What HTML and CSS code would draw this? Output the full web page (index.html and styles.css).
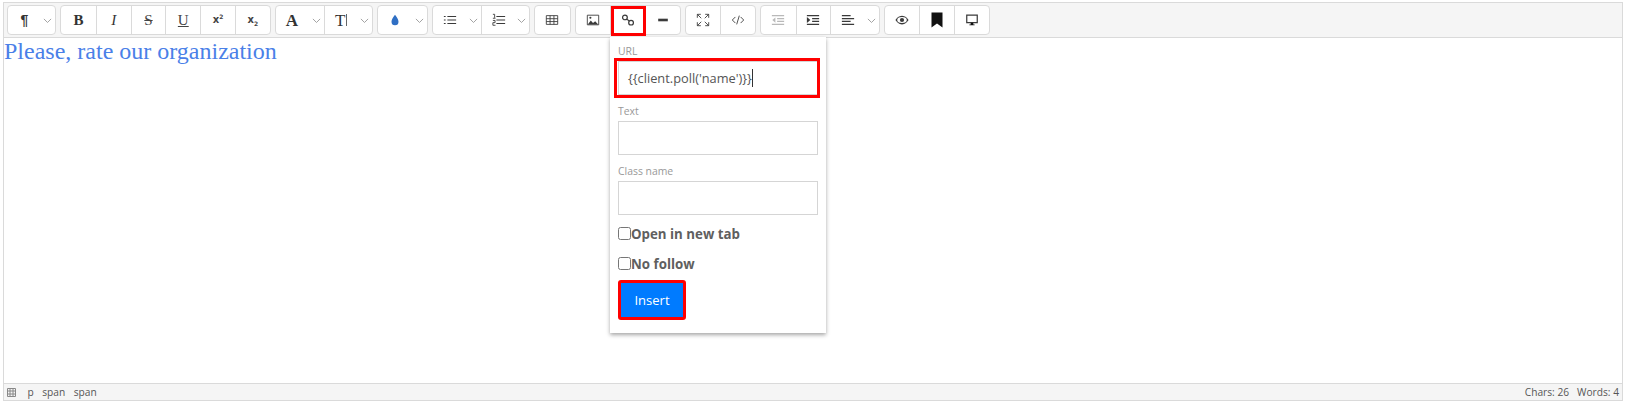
FILE: index.html
```html
<!DOCTYPE html>
<html lang="en">
<head>
<meta charset="utf-8">
<title>Editor</title>
<link rel="stylesheet" href="styles.css">
</head>
<body>
<div class="editor">
  <div class="toolbar">
    <div class="group">
      <div class="btn sel"><span class="gl para">¶</span><svg class="chev" viewBox="0 0 10 6"><path d="M1 1l4 4 4-4"/></svg></div>
    </div>
    <div class="group">
      <div class="btn"><b class="gl serif">B</b></div>
      <div class="btn"><i class="gl serif">I</i></div>
      <div class="btn"><s class="gl serif thin">S</s></div>
      <div class="btn"><u class="gl serif thin">U</u></div>
      <div class="btn"><span class="gl sm">x<sup>2</sup></span></div>
      <div class="btn"><span class="gl sm">x<sub>2</sub></span></div>
    </div>
    <div class="group">
      <div class="btn sel"><b class="gl serif big">A</b><svg class="chev" viewBox="0 0 10 6"><path d="M1 1l4 4 4-4"/></svg></div>
      <div class="btn sel"><span class="gl serif tt">T<svg class="tbar" viewBox="0 0 3 12"><path d="M1.500 0v12"/></svg></span><svg class="chev" viewBox="0 0 10 6"><path d="M1 1l4 4 4-4"/></svg></div>
    </div>
    <div class="group">
      <div class="btn sel"><svg class="ic" viewBox="0 0 16 16"><path class="drop" d="M8 2c2 3 4 5 4 8a4 4 0 0 1-8 0c0-3 2-5 4-8z"/></svg><svg class="chev" viewBox="0 0 10 6"><path d="M1 1l4 4 4-4"/></svg></div>
    </div>
    <div class="group">
      <div class="btn sel"><svg class="ic" viewBox="0 0 16 16"><path class="ln" d="M1 4h2M1 8h2M1 12h2M5 4h10M5 8h10M5 12h10"/></svg><svg class="chev" viewBox="0 0 10 6"><path d="M1 1l4 4 4-4"/></svg></div>
      <div class="btn sel"><svg class="ic" viewBox="0 0 16 16"><path class="ln" d="M5 4h10M5 8h10M5 12h10"/><path class="ln thin" d="M1 1.500h2v4M1 6h3M1 8.500h2.500v2.500H1V14h3"/></svg><svg class="chev" viewBox="0 0 10 6"><path d="M1 1l4 4 4-4"/></svg></div>
    </div>
    <div class="group">
      <div class="btn"><svg class="ic" viewBox="0 0 16 16"><path class="ln thin" d="M1.500 3h13v10h-13zM1.500 6.500h13M1.500 9.800h13M5.800 3v10M10.200 3v10"/></svg></div>
    </div>
    <div class="group">
      <div class="btn"><svg class="ic" viewBox="0 0 16 16"><path class="ln thin" d="M1.500 2.500h13v11h-13z"/><path class="fill" d="M2 13l3.500-4.500 2.500 3 2.500-2 3.500 3.500z"/><circle class="fill" cx="5" cy="5.500" r="1.200"/></svg></div>
      <div class="btn mark"><svg class="ic" viewBox="0 0 16 16"><circle class="ln" cx="4.500" cy="5" r="2.700"/><circle class="ln" cx="11.500" cy="11" r="2.700"/><path class="ln" d="M6.500 7l3 2.200"/></svg></div>
      <div class="btn"><svg class="ic" viewBox="0 0 16 16"><path class="ln heavy" d="M2.500 8h11"/></svg></div>
    </div>
    <div class="group">
      <div class="btn"><svg class="ic" viewBox="0 0 16 16"><path class="ln thin" d="M1.500 5.500V1.500H5.500M1.500 1.500l4.500 4.500M14.500 5.500V1.500h-4M14.500 1.500l-4.500 4.500M1.500 10.500v4h4M1.500 14.500l4.500-4.500M14.500 10.500v4h-4M14.500 14.500l-4.500-4.500"/></svg></div>
      <div class="btn"><svg class="ic" viewBox="0 0 16 16"><path class="ln thin" d="M5 4.500L1.500 8 5 11.500M11 4.500L14.500 8 11 11.500M9.500 3l-3 10"/></svg></div>
    </div>
    <div class="group">
      <div class="btn"><svg class="ic off" viewBox="0 0 16 16"><path class="ln" d="M1 3h14M7 6.300h8M7 9.600h8M1 13h14"/><path class="fill" d="M5 5v6L1.500 8z"/></svg></div>
      <div class="btn"><svg class="ic" viewBox="0 0 16 16"><path class="ln" d="M1 3h14M7 6.300h8M7 9.600h8M1 13h14"/><path class="fill" d="M1 4.500v7L5 8z"/></svg></div>
      <div class="btn sel"><svg class="ic" viewBox="0 0 16 16"><path class="ln" d="M1 3h10M1 6.300h14M1 9.600h10M1 13h14"/></svg><svg class="chev" viewBox="0 0 10 6"><path d="M1 1l4 4 4-4"/></svg></div>
    </div>
    <div class="group">
      <div class="btn"><svg class="ic" viewBox="0 0 16 16"><path class="fill" fill-rule="evenodd" d="M8 3c3.500 0 6 2.500 7.500 5-1.500 2.500-4 5-7.500 5S2 10.500.5 8C2 5.500 4.500 3 8 3zm0 1.600a5.500 3.400 0 0 0 0 6.800 5.500 3.400 0 0 0 0-6.800z"/><circle class="fill" cx="8" cy="8" r="2.400"/></svg></div>
      <div class="btn"><svg class="ic tall" viewBox="0 0 16 16"><path class="mono" d="M2.500 .5h11v15L8 11.500l-5.500 4z"/></svg></div>
      <div class="btn"><svg class="ic" viewBox="0 0 16 16"><path class="ln" d="M2 2.500h12v8.500H2z"/><path class="mono" d="M6.500 11h3v2H11v1H5v-1h1.500z"/></svg></div>
    </div>
  </div>
  <div class="body">
    <p class="content">Please, rate our organization</p>
  </div>
  <div class="status">
    <div class="path">
      <svg class="grid" viewBox="0 0 9 9"><path d="M0.500 0.500h8v8h-8zM3 0.500v8M6 0.500v8M0.500 3h8M0.500 6h8"/></svg>
      <span>p</span><span>span</span><span>span</span>
    </div>
    <div class="counts"><span>Chars: 26</span><span>Words: 4</span></div>
  </div>
  <form class="popup">
    <label class="fld-label">URL</label>
    <div class="input mark"><span class="typed">{{client.poll('name')}}</span></div>
    <label class="fld-label">Text</label>
    <div class="input"></div>
    <label class="fld-label">Class name</label>
    <div class="input"></div>
    <label class="check"><input type="checkbox">Open in new tab</label>
    <label class="check"><input type="checkbox">No follow</label>
    <button class="insert" type="button">Insert</button>
  </form>
</div>
</body>
</html>
```
FILE: styles.css
```css
* { box-sizing: border-box; }
html, body { margin: 0; background: #fff; }
body { padding: 2px 5px 5px 3px; height: 406px; font-family: "Open Sans", "Noto Sans", sans-serif; color: #333; }

.editor { position: relative; height: 399px; display: flex; flex-direction: column; border: 1px solid #dadada; }

.toolbar { height: 35px; flex: none; display: flex; gap: 4px; padding: 2px 3px 0 2.500px; background: #f5f5f5; border-bottom: 1px solid #dadada; }
.group { display: flex; height: 30px; background: #fff; border: 1px solid #dadada; border-radius: 4px; }
.btn { position: relative; width: 34.670px; flex: none; display: flex; align-items: center; justify-content: center; border-left: 1px solid #dadada; color: #333; }
.btn:first-child { border-left: 0; }
.btn.sel { width: 48.250px; justify-content: flex-start; padding-left: 10px; }
.group:first-child .btn.sel { width: 47.500px; }
.group:nth-child(2) .btn { width: 34.800px; }
.btn.mark::after { content: ""; position: absolute; left: 0; top: 0; right: -1px; bottom: -2px; border: 3px solid #f00; z-index: 2; }

.gl { line-height: 1; font-size: 15px; color: #333; }
.serif { font-family: "Liberation Serif", serif; }
.thin { font-weight: 400; color: #444; }
.big { font-size: 17px; }
.para { margin-left: 3px; font-weight: 700; font-size: 14px; font-family: "Liberation Sans", sans-serif; }
.sm { font-family: "DejaVu Sans", sans-serif; font-size: 10px; font-weight: 700; color: #444; }
.sm sup, .sm sub { font-size: 6px; line-height: 0; }
.tt { display: inline-flex; align-items: center; font-size: 17px; }
.tbar { width: 3px; height: 12px; }
.tbar path { stroke: #666; fill: none; stroke-width: 1; }

.chev { position: absolute; right: 3px; top: 12px; width: 9px; height: 5.400px; }
.chev path { fill: none; stroke: #999; stroke-width: 1; }

.ic { width: 14px; height: 14px; display: block; }
.ic.tall { width: 16px; height: 16px; }
.ic.off { opacity: .35; }
.ln { fill: none; stroke: #3a3a3a; stroke-width: 1.400; }
.ln.thin { stroke-width: 1; }
.ln.heavy { stroke-width: 3; }
.fill { fill: #3a3a3a; }
.mono { fill: #111; }
.drop { fill: #2f6fc4; }

.body { flex: 1; min-height: 0; background: #fff; }
.content { margin: 0; font-family: "Liberation Serif", serif; font-size: 24px; line-height: 26px; color: #4a80e8; }

.status { height: 17px; flex: none; display: flex; align-items: center; justify-content: space-between; padding: 0 3px 0 3px; background: #f5f5f5; border-top: 1px solid #dadada; font-size: 10.200px; color: #555; }
.path { display: flex; align-items: center; gap: 8.500px; }
.grid { width: 9px; height: 9px; margin-right: 3px; }
.grid path { fill: none; stroke: #888; stroke-width: 1; }
.counts { display: flex; gap: 8px; }

.popup { position: absolute; left: 606px; top: 34px; width: 216px; height: 296px; padding: 7px 8px 8px; display: flex; flex-direction: column; align-items: flex-start; background: #fff; box-shadow: 0 2px 4px rgba(0, 0, 0, .35); z-index: 3; }
.fld-label { font-size: 10.400px; line-height: 14px; height: 14px; margin-bottom: 3px; color: #999; }
.input { position: relative; width: 200px; height: 34px; flex: none; padding-left: 9px; display: flex; align-items: center; border: 1px solid #d5d5d5; }
.input.mark::after { content: ""; position: absolute; left: -5px; top: -4px; right: -3px; bottom: -4px; border: 3px solid #f00; }
.input + .fld-label { margin-top: 9px; }
.typed { font-size: 12.800px; color: #555; border-right: 1px solid #333; line-height: 18px; }
.check { display: flex; align-items: center; height: 16px; margin-top: 10.500px; font-size: 13.300px; font-weight: 700; color: #5f5f5f; }
.check + .check { margin-top: 14px; }
.check input { width: 13px; height: 13px; margin: 0; }
.insert { width: 68px; height: 40px; margin-top: 8.500px; padding: 0; background: #007bff; color: #fff; border: 3px solid #f00; border-radius: 3px; font: 13px "Open Sans", "Noto Sans", sans-serif; }
```
